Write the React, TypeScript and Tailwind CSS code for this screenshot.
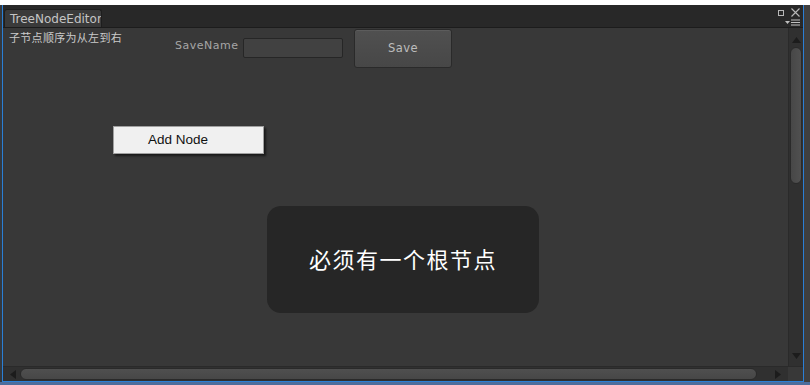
import React from 'react';

// ── Small drawn glyphs ────────────────────────────────────────────

function TriUp() {
  return (
    <svg width="9" height="6" viewBox="0 0 9 6">
      <polygon points="4.5 0 9 6 0 6" fill="#1c1c1c" />
    </svg>
  );
}

function TriDown() {
  return (
    <svg width="9" height="6" viewBox="0 0 9 6">
      <polygon points="0 0 9 0 4.5 6" fill="#1c1c1c" />
    </svg>
  );
}

function TriLeft() {
  return (
    <svg width="6" height="9" viewBox="0 0 6 9">
      <polygon points="6 0 6 9 0 4.5" fill="#1c1c1c" />
    </svg>
  );
}

function TriRight() {
  return (
    <svg width="6" height="9" viewBox="0 0 6 9">
      <polygon points="0 0 6 4.5 0 9" fill="#1c1c1c" />
    </svg>
  );
}

// ── Component ────────────────────────────────────────────────────

export default function App() {
  const ui = { fontFamily: '"DejaVu Sans", "Noto Sans CJK SC", sans-serif' };
  const cjk = { fontFamily: '"Noto Sans CJK SC", "DejaVu Sans", sans-serif' };

  return (
    <div className="flex h-[385px] w-[810px] flex-col overflow-hidden bg-[#3e3e3e]" style={ui}>
      {/* top white strip */}
      <div className="h-[5px] w-full shrink-0 bg-white" />

      <div className="flex h-[377px] shrink-0">
        {/* desktop edge on the left */}
        <div className="w-[2px] shrink-0 bg-[#34393f]" />

        {/* editor window */}
        <div className="flex w-[802px] shrink-0 flex-col border-x border-b border-[#2a7fd6] bg-[#383838]">
          {/* tab bar */}
          <div className="flex h-[23px] shrink-0 items-end border-b border-[#1c1c1c] bg-[#282828] pl-[1px]">
            <div className="flex h-[18px] w-[98px] items-center overflow-hidden whitespace-nowrap rounded-t-[3px] border border-b-0 border-[#1e1e1e] bg-[#3a3a3a] pl-[5px] pt-[1px] text-[12px] leading-none text-[#c4c4c4]">
              TreeNodeEditor
            </div>
            <div className="flex-1" />
            <div className="flex h-full w-[30px] flex-col items-end pr-[3px]">
              <div className="flex items-center gap-[7px] pt-[3px]">
                <div className="h-[6px] w-[6px] border-[1.5px] border-[#b8b8b8]" />
                <svg width="9" height="9" viewBox="0 0 9 9">
                  <path d="M0.5 0.5 L8.5 8.5 M8.5 0.5 L0.5 8.5" stroke="#b8b8b8" strokeWidth="1.1" />
                </svg>
              </div>
              <div className="mt-[2px] flex items-center gap-[1px]">
                <svg width="5" height="3" viewBox="0 0 5 3">
                  <polygon points="0 0 5 0 2.5 3" fill="#c0c0c0" />
                </svg>
                <svg width="9" height="7" viewBox="0 0 9 7">
                  <path d="M0 1 H9 M0 3.5 H9 M0 6 H9" stroke="#c0c0c0" strokeWidth="1" />
                </svg>
              </div>
            </div>
          </div>

          {/* canvas + vertical scrollbar */}
          <div className="flex min-h-0 flex-1">
            <div className="relative min-w-0 flex-1 bg-[#383838]">
              <div className="flex items-start">
                <div className="ml-[6px] mt-[2px] w-[166px] text-[11px] leading-[14px] tracking-[0.3px] text-[#cacaca]" style={cjk}>
                  子节点顺序为从左到右
                </div>
                <div className="mt-[10px] w-[68px] text-[11px] leading-[15px] tracking-[0.5px] text-[#a6a6a6]">
                  SaveName
                </div>
                <div className="mt-[10px] h-[20px] w-[100px] rounded-[2px] border border-[#262626] bg-[#414141]" />
                <button className="ml-[11px] mt-[1px] flex h-[39px] w-[98px] items-center justify-center rounded-[3px] border border-[#2a2a2a] bg-gradient-to-b from-[#505050] to-[#474747] text-[11.5px] tracking-[0.5px] text-[#bdbdbd] shadow-[inset_0_1px_0_#5c5c5c]">
                  Save
                </button>
              </div>

              {/* context menu */}
              <div className="absolute left-[110px] top-[98px] flex h-[28px] w-[151px] items-center border border-[#a0a0a0] bg-[#f0f0f0] shadow-[2px_2px_2px_rgba(0,0,0,0.55)]">
                <span
                  className="pl-[34px] text-[13.5px] text-[#101010]"
                  style={{ fontFamily: '"Liberation Sans", Arial, sans-serif' }}
                >
                  Add Node
                </span>
              </div>

              {/* notification */}
              <div
                className="absolute left-[264px] top-[178px] flex h-[107px] w-[272px] items-center justify-center rounded-[14px] bg-[#262626] pb-[3px] text-[22px] tracking-[1.5px] text-white"
                style={cjk}
              >
                必须有一个根节点
              </div>
            </div>

            {/* vertical scrollbar */}
            <div className="flex w-[15px] shrink-0 flex-col items-center border-l border-[#2a2a2a] bg-[#303030]">
              <div className="flex h-[18px] items-center pt-[6px]">
                <TriUp />
              </div>
              <div className="mt-[1px] h-[137px] w-[12px] rounded-full border border-[#2a2a2a] bg-gradient-to-r from-[#474747] to-[#505050]" />
              <div className="flex-1" />
              <div className="flex h-[16px] items-center pb-[4px]">
                <TriDown />
              </div>
            </div>
          </div>

          {/* horizontal scrollbar */}
          <div className="flex h-[15px] shrink-0 border-t border-[#2a2a2a] bg-[#303030]">
            <div className="flex w-[14px] items-center justify-end pr-[1px]">
              <TriLeft />
            </div>
            <div className="ml-[3px] mt-[1px] h-[12px] w-[737px] rounded-full border border-[#2a2a2a] bg-gradient-to-b from-[#4f4f4f] to-[#474747]" />
            <div className="flex-1" />
            <div className="flex w-[20px] items-center justify-center">
              <TriRight />
            </div>
            <div className="w-[15px] bg-[#383838]" />
          </div>
        </div>

        {/* desktop edge on the right */}
        <div className="flex-1 bg-[#3f3f3f]" />
      </div>

      {/* desktop below */}
      <div className="flex-1 bg-[#4d6d9c]" />
    </div>
  );
}
